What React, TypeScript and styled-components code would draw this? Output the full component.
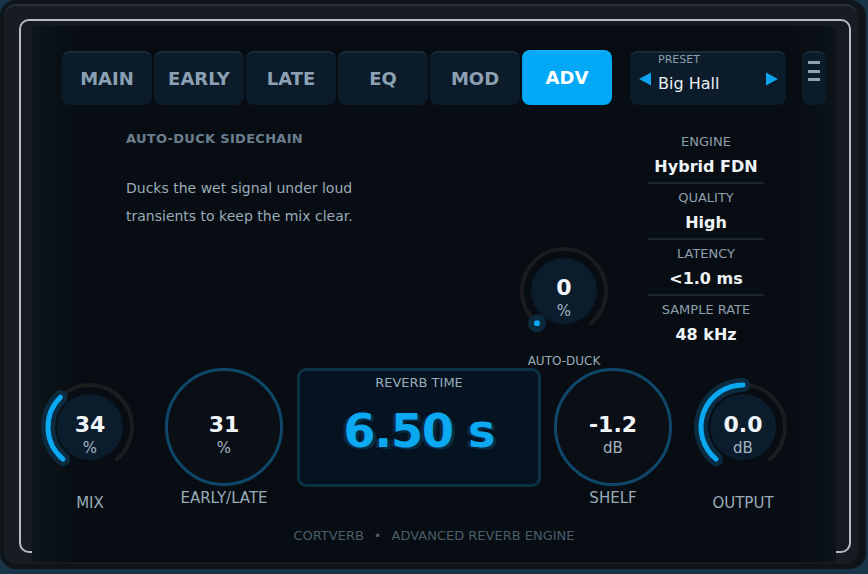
import React from 'react';
import styled, { createGlobalStyle } from 'styled-components';

const Global = createGlobalStyle`
  html, body { margin: 0; padding: 0; background: #183448; }
  body {
    width: 868px; height: 574px; overflow: hidden;
    font-family: "DejaVu Sans", Verdana, sans-serif;
  }
  * { box-sizing: border-box; }
`;

const Shell = styled.div`
  width: 866px;
  height: 569px;
  border-radius: 16px;
  background: #0f1419;
  padding: 4px 8px 5px 4px;
`;

const Bezel = styled.div`
  height: 100%;
  border-radius: 12px;
  background: #161c22;
  border-top: 2px solid #28303a;
  padding: 13px 7px 0 15px;
`;

const Frame = styled.div`
  height: 534px;
  border: 2px solid #b3bbc4;
  border-radius: 10px;
  background: #141a20;
  padding: 5px 12px 0 11px;
`;

const Panel = styled.div`
  position: relative;
  z-index: 1;
  width: 804px;
  height: 536px;
  border-radius: 4px;
  background: linear-gradient(90deg, #0d161c 0%, #0a1217 2.5%, #070d12 6%, #070d12 94%, #0a1116 98%, #0c141a 100%);
  display: flex;
  flex-direction: column;
`;

/* ---------- header ---------- */
const Header = styled.div`
  display: flex;
  align-items: flex-start;
  margin: 25px 0 0 30px;
`;

const TabBar = styled.div`
  display: flex;
  gap: 2px;
`;

const Tab = styled.div<{ $active?: boolean }>`
  width: 90px;
  height: ${p => (p.$active ? 55 : 54)}px;
  margin-top: ${p => (p.$active ? -1 : 0)}px;
  border-radius: 8px;
  background: ${p => (p.$active ? '#02a8f6' : '#0b1b29')};
  border-top: 2px solid ${p => (p.$active ? '#12b0fa' : '#1a2c3b')};
  color: ${p => (p.$active ? '#ffffff' : '#8ba0b2')};
  font-weight: bold;
  font-size: 18px;
  display: flex;
  align-items: center;
  justify-content: center;
  padding-bottom: 2px;
`;

const Preset = styled.div`
  margin-left: 18px;
  width: 156px;
  height: 54px;
  border-radius: 8px;
  background: #0b1b29;
  border-top: 2px solid #1a2c3b;
  display: flex;
  align-items: center;
  padding: 0 7px 0 8px;
`;

const PresetText = styled.div`
  flex: 1;
  align-self: flex-start;
  margin-left: 6px;
  display: flex;
  flex-direction: column;
`;

const PresetLabel = styled.div`
  font-size: 11px;
  line-height: 14px;
  color: #8b9eaf;
`;

const PresetName = styled.div`
  margin-top: 7px;
  font-size: 16px;
  line-height: 20px;
  color: #e8eef3;
`;

const MenuButton = styled.div`
  margin-left: 16px;
  width: 24px;
  height: 54px;
  border-radius: 8px;
  background: #0b1b29;
  border-top: 2px solid #1a2c3b;
  padding-top: 8px;
  display: flex;
  flex-direction: column;
  align-items: center;
  gap: 5.5px;
`;

const MenuLine = styled.div`
  width: 12px;
  height: 3px;
  background: #8ea3b4;
`;

/* ---------- upper section ---------- */
const Upper = styled.div`
  display: flex;
  height: 262px;
  margin-left: 30px;
`;

const Intro = styled.div`
  width: 452px;
  padding: 26px 0 0 64px;
`;

const IntroTitle = styled.div`
  font-size: 13px;
  line-height: 16px;
  font-weight: bold;
  letter-spacing: 0.3px;
  color: #6b7e8e;
`;

const IntroText = styled.div`
  margin-top: 27px;
  width: 250px;
  font-size: 14px;
  line-height: 28px;
  color: #9aabb9;
`;

const DuckColumn = styled.div`
  width: 100px;
  padding-top: 136px;
  display: flex;
  flex-direction: column;
  align-items: center;
`;

const Info = styled.div`
  margin-left: 34px;
  width: 116px;
  padding-top: 23px;
  display: flex;
  flex-direction: column;
`;

const InfoBlock = styled.div<{ $last?: boolean }>`
  padding: 6px 0 5px;
  border-bottom: 2px solid ${p => (p.$last ? 'transparent' : '#1b2631')};
  display: flex;
  flex-direction: column;
  align-items: center;
`;

const InfoLabel = styled.div`
  font-size: 13px;
  line-height: 16px;
  color: #8d9fae;
`;

const InfoValue = styled.div`
  margin-top: 7px;
  font-size: 16px;
  line-height: 20px;
  font-weight: bold;
  color: #eef3f7;
`;

/* ---------- bottom row ---------- */
const Bottom = styled.div`
  display: flex;
  align-items: flex-start;
  height: 148px;
  padding-left: 8px;
`;

const KnobColumn = styled.div<{ $w: number; $ml: number; $mt: number }>`
  width: ${p => p.$w}px;
  margin-left: ${p => p.$ml}px;
  margin-top: ${p => p.$mt}px;
  display: flex;
  flex-direction: column;
  align-items: center;
`;

const KnobFace = styled.div<{ $size: number; $pt: number }>`
  position: relative;
  flex-shrink: 0;
  width: ${p => p.$size}px;
  height: ${p => p.$size}px;
  padding-top: ${p => p.$pt}px;
  display: flex;
  flex-direction: column;
  align-items: center;
  justify-content: center;
  gap: 3px;
  & > svg { position: absolute; left: 0; top: 0; }
`;

const KnobValue = styled.div`
  position: relative;
  font-size: 22px;
  line-height: 22px;
  font-weight: bold;
  color: #f1f5f8;
`;

const KnobUnit = styled.div`
  position: relative;
  font-size: 15px;
  line-height: 18px;
  color: #a3b3c1;
`;

const KnobLabel = styled.div<{ $mt: number; $size?: number }>`
  flex-shrink: 0;
  margin-top: ${p => p.$mt}px;
  font-size: ${p => p.$size ?? 15}px;
  line-height: 18px;
  color: #9aabb9;
  white-space: nowrap;
`;

const ReverbBox = styled.div`
  margin-left: 13px;
  margin-top: 1px;
  width: 244px;
  height: 119px;
  border: 3px solid #0e3245;
  border-radius: 9px;
  background: #051320;
  display: flex;
  flex-direction: column;
  align-items: center;
  padding-top: 4px;
`;

const ReverbLabel = styled.div`
  font-size: 13px;
  line-height: 16px;
  color: #9aabb9;
`;

const ReverbValue = styled.div`
  margin-top: 14px;
  font-size: 46px;
  line-height: 52px;
  font-weight: bold;
  letter-spacing: -1px;
  color: #0ba9f2;
  text-shadow: -3px 1px 0 #0a2b44, 3px 2px 0 #0a2b44;
`;

const Footer = styled.div`
  padding-top: 13px;
  text-align: center;
  font-size: 13px;
  line-height: 16px;
  color: #4b5c6a;
`;

const Dot = styled.span`
  margin: 0 10px;
`;

/* ---------- drawing helpers ---------- */
const polar = (cx: number, cy: number, r: number, deg: number) => {
  const a = ((deg - 90) * Math.PI) / 180;
  return [cx + r * Math.cos(a), cy + r * Math.sin(a)];
};

const arc = (cx: number, cy: number, r: number, a0: number, a1: number) => {
  const [x0, y0] = polar(cx, cy, r, a0);
  const [x1, y1] = polar(cx, cy, r, a1);
  const large = a1 - a0 > 180 ? 1 : 0;
  return `M ${x0.toFixed(2)} ${y0.toFixed(2)} A ${r} ${r} 0 ${large} 1 ${x1.toFixed(2)} ${y1.toFixed(2)}`;
};

const START = -140;
const SWEEP = 280;

const ArcKnobSvg: React.FC<{ value: number }> = ({ value }) => {
  const c = 50;
  const r = 42;
  const end = START + SWEEP * value;
  const [dx, dy] = polar(c, c, r, START);
  return (
    <svg width="100" height="100" viewBox="0 0 100 100">
      <path d={arc(c, c, r, START, START + SWEEP)} stroke="#1c1b1e" strokeWidth="4" fill="none" strokeLinecap="round" />
      <circle cx={c} cy={c} r="33" fill="#0b1d2d" />
      {value > 0 ? (
        <>
          <path d={arc(c, c, r, START, end)} stroke="#0c2b40" strokeWidth="14" fill="none" strokeLinecap="round" />
          <path d={arc(c, c, r, START, end)} stroke="#0aa8f0" strokeWidth="5" fill="none" strokeLinecap="round" />
        </>
      ) : (
        <>
          <circle cx={dx} cy={dy} r="9" fill="#0c2a3d" />
          <circle cx={dx} cy={dy} r="3" fill="#0aa8f5" />
        </>
      )}
    </svg>
  );
};

const RingSvg: React.FC = () => (
  <svg width="120" height="120" viewBox="0 0 120 120">
    <circle cx="60" cy="60" r="57.5" fill="#0a0e15" stroke="#0e4769" strokeWidth="3" />
  </svg>
);

const Triangle: React.FC<{ dir: 'left' | 'right' }> = ({ dir }) => (
  <svg width="14" height="14" viewBox="0 0 14 14">
    {dir === 'left' ? <polygon points="13,0.5 13,13.5 1,7" fill="#0ea3ec" /> : <polygon points="1,0.5 1,13.5 13,7" fill="#0ea3ec" />}
  </svg>
);

const tabs = ['MAIN', 'EARLY', 'LATE', 'EQ', 'MOD', 'ADV'];
const info = [
  ['ENGINE', 'Hybrid FDN'],
  ['QUALITY', 'High'],
  ['LATENCY', '<1.0 ms'],
  ['SAMPLE RATE', '48 kHz'],
];

export default function App() {
  return (
    <>
      <Global />
      <Shell>
        <Bezel>
          <Frame>
            <Panel>
              <Header>
                <TabBar>
                  {tabs.map(t => (
                    <Tab key={t} $active={t === 'ADV'}>{t}</Tab>
                  ))}
                </TabBar>
                <Preset>
                  <Triangle dir="left" />
                  <PresetText>
                    <PresetLabel>PRESET</PresetLabel>
                    <PresetName>Big Hall</PresetName>
                  </PresetText>
                  <Triangle dir="right" />
                </Preset>
                <MenuButton>
                  <MenuLine />
                  <MenuLine />
                  <MenuLine />
                </MenuButton>
              </Header>

              <Upper>
                <Intro>
                  <IntroTitle>AUTO-DUCK SIDECHAIN</IntroTitle>
                  <IntroText>Ducks the wet signal under loud transients to keep the mix clear.</IntroText>
                </Intro>
                <DuckColumn>
                  <KnobFace $size={100} $pt={15}>
                    <ArcKnobSvg value={0} />
                    <KnobValue>0</KnobValue>
                    <KnobUnit>%</KnobUnit>
                  </KnobFace>
                  <KnobLabel $mt={11} $size={12}>AUTO-DUCK</KnobLabel>
                </DuckColumn>
                <Info>
                  {info.map(([l, v], i) => (
                    <InfoBlock key={l} $last={i === info.length - 1}>
                      <InfoLabel>{l}</InfoLabel>
                      <InfoValue>{v}</InfoValue>
                    </InfoBlock>
                  ))}
                </Info>
              </Upper>

              <Bottom>
                <KnobColumn $w={100} $ml={0} $mt={10}>
                  <KnobFace $size={100} $pt={16}>
                    <ArcKnobSvg value={0.34} />
                    <KnobValue>34</KnobValue>
                    <KnobUnit>%</KnobUnit>
                  </KnobFace>
                  <KnobLabel $mt={17}>MIX</KnobLabel>
                </KnobColumn>
                <KnobColumn $w={120} $ml={24} $mt={0}>
                  <KnobFace $size={120} $pt={17}>
                    <RingSvg />
                    <KnobValue>31</KnobValue>
                    <KnobUnit>%</KnobUnit>
                  </KnobFace>
                  <KnobLabel $mt={2}>EARLY/LATE</KnobLabel>
                </KnobColumn>
                <ReverbBox>
                  <ReverbLabel>REVERB TIME</ReverbLabel>
                  <ReverbValue>6.50 s</ReverbValue>
                </ReverbBox>
                <KnobColumn $w={120} $ml={12} $mt={0}>
                  <KnobFace $size={120} $pt={17}>
                    <RingSvg />
                    <KnobValue>-1.2</KnobValue>
                    <KnobUnit>dB</KnobUnit>
                  </KnobFace>
                  <KnobLabel $mt={2}>SHELF</KnobLabel>
                </KnobColumn>
                <KnobColumn $w={100} $ml={20} $mt={10}>
                  <KnobFace $size={100} $pt={16}>
                    <ArcKnobSvg value={0.5} />
                    <KnobValue>0.0</KnobValue>
                    <KnobUnit>dB</KnobUnit>
                  </KnobFace>
                  <KnobLabel $mt={17}>OUTPUT</KnobLabel>
                </KnobColumn>
              </Bottom>

              <Footer>
                CORTVERB<Dot>•</Dot>ADVANCED REVERB ENGINE
              </Footer>
            </Panel>
          </Frame>
        </Bezel>
      </Shell>
    </>
  );
}
